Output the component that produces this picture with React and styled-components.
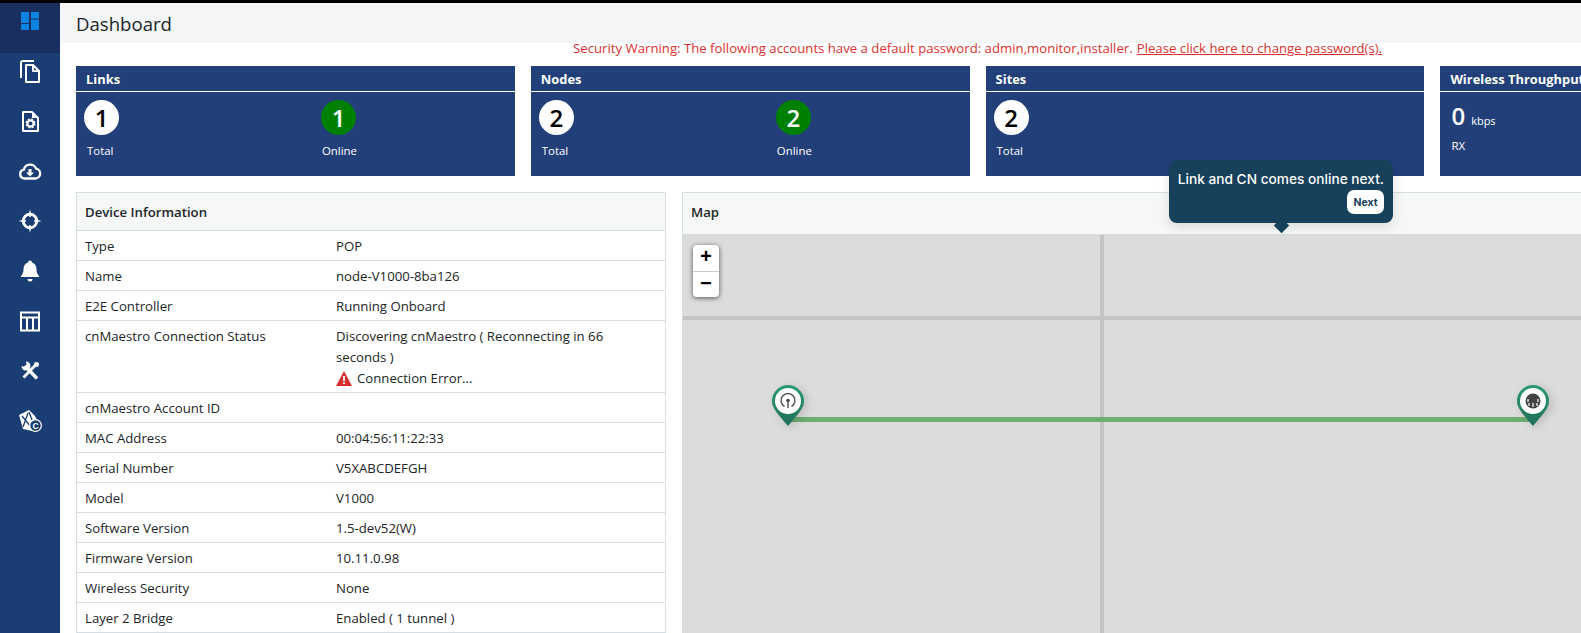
import React from "react";
import styled, { createGlobalStyle } from "styled-components";

const Global = createGlobalStyle`
  html, body { margin: 0; padding: 0; background: #fff; }
  body { font-family: "Open Sans", "Noto Sans", sans-serif; color: #212529; overflow: hidden; }
  * { box-sizing: border-box; }
`;

const Shell = styled.div`
  width: 1581px; height: 633px; overflow: hidden; display: flex; flex-direction: column; background: #fff;
`;
const TopEdge = styled.div`height: 3px; background: #000; flex: none;`;
const Body = styled.div`display: flex; flex: 1; min-height: 0;`;
const Side = styled.nav`width: 60px; flex: none; background: #1a3e73; display: flex; flex-direction: column;`;
const NavItem = styled.div`
  height: 50px; flex: none; display: flex; justify-content: center; align-items: flex-start; padding-top: 6px;
  background: ${p => (p.$active ? "#182f5f" : "transparent")};
  svg { width: 24px; height: 24px; display: block; }
`;
const Main = styled.main`flex: 1; min-width: 0; overflow: hidden; display: flex; flex-direction: column; position: relative;`;
const Header = styled.header`
  height: 40px; flex: none; background: #f4f5f7; display: flex; align-items: center; padding: 1px 16px 0;
  font-size: 18.6px; color: #212529;
`;
const Warning = styled.div`
  height: 23px; flex: none; padding-left: 513px; font-size: 13.2px; line-height: 11px; color: #e0312f;
  display: flex; align-items: flex-start; white-space: nowrap; gap: 4px;
  a { color: inherit; text-decoration: underline; }
`;
const Cards = styled.section`display: flex; gap: 16px; padding-left: 16px; flex: none;`;
const Card = styled.article`width: 438.8px; height: 110px; flex: none; background: #223f7a; color: #fff;`;
const CardTitle = styled.h3`
  margin: 0; height: 26px; padding: 1px 10px 0; border-bottom: 1px solid #fff; font-size: 12.9px; font-weight: 700;
  display: flex; align-items: center; white-space: nowrap;
`;
const Stats = styled.div`display: grid; grid-template-columns: 237px 1fr; padding: 8px 0 0 8px;`;
const Stat = styled.div`display: flex; flex-direction: column; align-items: flex-start;`;
const Circle = styled.div`
  width: 35px; height: 35px; border-radius: 50%; display: flex; align-items: center; justify-content: center;
  background: ${p => (p.$online ? "#008000" : "#fff")}; color: ${p => (p.$online ? "#fff" : "#000")};
  font-size: 24px; font-weight: 600; line-height: 1;
`;
const StatLabel = styled.div`font-size: 11.4px; margin: 8px 0 0 ${p => (p.$online ? 1 : 3)}px; line-height: 16px;`;
const Rate = styled.div`padding: 9px 0 0 11px; display: flex; align-items: baseline; gap: 6px; font-size: 11px;`;
const RateValue = styled.span`font-size: 24px; font-weight: 600; line-height: 30px;`;
const RateLabel = styled.div`font-size: 11.4px; padding: 7px 0 0 11px;`;
const Panels = styled.section`display: flex; gap: 16px; padding: 16px 0 0 16px; flex: 1; min-height: 0;`;
const InfoPanel = styled.div`width: 590px; flex: none; border: 1px solid #d5dfe3; border-bottom: none;`;
const PanelHead = styled.div`
  height: ${p => p.$h}px; background: #f6f8f8; border-bottom: 1px solid #d5dfe3; display: flex; align-items: center;
  padding: ${p => (p.$h === 38 ? "1px 8px 0" : "0 8px 3px")}; font-size: 13.2px; font-weight: 600; color: #212529;
`;
const Row = styled.div`
  display: grid; grid-template-columns: 251px 1fr; padding: 5px 8px 3px; border-bottom: 1px solid #d5dfe3;
  font-size: 13.2px; line-height: 21px; color: #212529;
`;
const Value = styled.div`padding-right: 10px;`;
const Warn = styled.div`display: flex; align-items: center; gap: 5px; height: 21px; svg { width: 16px; height: 15px; }`;
const MapPanel = styled.div`flex: 1; min-width: 0; border-left: 1px solid #d5dfe3; border-top: 1px solid #d5dfe3; display: flex; flex-direction: column; margin-right: -30px;`;
const MapCanvas = styled.div`flex: 1; background: #dcdcdc; position: relative; overflow: hidden;`;
const RoadV = styled.div`position: absolute; left: 417px; top: 0; bottom: 0; width: 4px; background: #c4c4c4;`;
const RoadH = styled.div`position: absolute; left: 0; right: 0; top: 81px; height: 4px; background: #c4c4c4;`;
const Link = styled.div`position: absolute; left: 104px; top: 182px; width: 746px; height: 5px; background: #6fae72;`;
const Zoom = styled.div`
  position: absolute; left: 10px; top: 10px; width: 26px; height: 52px; background: #fff; border-radius: 4px;
  box-shadow: 0 1px 5px rgba(0,0,0,.65); display: flex; flex-direction: column;
`;
const ZoomBtn = styled.div`
  flex: 1; display: flex; align-items: center; justify-content: center; font: 700 20px "Liberation Mono", monospace; color: #000;
  & + & { border-top: 1px solid #ccc; }
`;
const PinWrap = styled.div`position: absolute; left: ${p => p.$x}px; top: 148px; width: 34px; height: 44px; filter: drop-shadow(3px 2px 4px rgba(0,0,0,.15)); svg { display: block; }`;
const Tip = styled.div`
  position: absolute; left: 1109px; top: 157px; width: 224px; height: 63px; background: #17405a; border-radius: 8px; color: #fff;
  padding: 11px 9px 0; display: flex; flex-direction: column; align-items: flex-end; font: 500 13.7px/17px Inter, sans-serif;
  box-shadow: 0 4px 12px rgba(0,0,0,.12); white-space: nowrap;
  &::after {
    content: ""; position: absolute; left: 106.5px; bottom: -7.5px; width: 11px; height: 11px; background: #17405a; transform: rotate(45deg);
  }
`;
const TipNext = styled.button`
  margin-top: 2px; width: 37px; height: 24px; border: 0; border-radius: 7px; background: #fff; color: #17405a; padding: 0;
  font: 700 10.5px Inter, sans-serif;
`;

const White = { fill: "#fff" };
const icons = [
  <svg viewBox="0 0 24 24" key="a"><g fill="#0a84e0"><rect x="3" y="3" width="8" height="11"/><rect x="13" y="3" width="8" height="6.500"/><rect x="3" y="15" width="8" height="6"/><rect x="13" y="10.500" width="8" height="10.500"/></g></svg>,
  <svg viewBox="0 0 24 24" key="b"><path fill="none" stroke="#fff" strokeWidth="2" strokeLinejoin="round" d="M16 2H5a2 2 0 0 0-2 2v15M8 6h7l6 6v11H8zM15 6v6h6"/></svg>,
  <svg viewBox="0 0 24 24" key="c"><path fill="none" stroke="#fff" strokeWidth="2" strokeLinejoin="round" d="M5 3h9l6 6v13H5z"/><path {...White} d="M14 3l6 6h-6z"/><circle cx="12.500" cy="14.500" r="3" fill="none" stroke="#fff" strokeWidth="2"/><circle cx="12.500" cy="14.500" r="4.300" fill="none" stroke="#fff" strokeWidth="1.400" strokeDasharray="2 1.400"/></svg>,
  <svg viewBox="0 0 24 24" key="d"><path fill="none" stroke="#fff" strokeWidth="2.300" d="M6.500 19.500a4.500 4.500 0 0 1-.7-8.900 6.500 6.500 0 0 1 12.300-1 5 5 0 0 1-.6 9.900z"/><path {...White} d="M10.500 10h3v3.500H16L12 17.500 8 13.500h2.500z"/></svg>,
  <svg viewBox="0 0 24 24" key="e"><circle cx="12" cy="12" r="6.800" fill="none" stroke="#fff" strokeWidth="2.800"/><path fill="#fff" d="M10.500 6L12 .5 13.500 6zM10.500 18L12 23.500 13.500 18zM6 10.500L.5 12 6 13.500zM18 10.500L23.500 12 18 13.500z"/><path stroke="#fff" strokeWidth="1.600" d="M12 5v3M12 16v3M5 12h3M16 12h3"/></svg>,
  <svg viewBox="0 0 24 24" key="f"><path {...White} d="M12 1.500a2 2 0 0 1 2 2c3 1 4.500 3.500 4.500 7 0 3.500 1 4.500 2.500 6.500v1H3v-1c1.500-2 2.500-3 2.500-6.500 0-3.500 1.500-6 4.500-7a2 2 0 0 1 2-2zM9.500 20h5a2.500 2.500 0 0 1-5 0z"/></svg>,
  <svg viewBox="0 0 24 24" key="g"><path fill="none" stroke="#fff" strokeWidth="2" d="M3 3.500h18v18H3zM3 8.500h18M9 8.500v13M15 8.500v13"/></svg>,
  <svg viewBox="0 0 24 24" key="h"><path stroke="#fff" strokeWidth="3.400" d="M8 8l11 11.500"/><path stroke="#fff" strokeWidth="2.800" d="M19 4.500L5.500 18.500"/><path {...White} d="M16.500 3.500l3-.5 1.500 1.500-.5 3-2 .5-2.500-2.500z"/><circle cx="8" cy="7" r="4.500" fill="#fff"/><path fill="#1a3e73" d="M3 2h5l.5 3.500L6 7.500 2.500 7z"/></svg>,
  <svg viewBox="0 0 24 24" key="i"><path {...White} d="M1 6l10-5 6 6 4 8-7 7-9-2z"/><path fill="none" stroke="#1a3e73" strokeWidth="1.300" d="M4 7l9 11M5 18l5-14M11 3l3 8"/><circle cx="17.500" cy="16.500" r="6.500" fill="#fff"/><circle cx="17.500" cy="16.500" r="5.200" fill="#1a3e73"/><text x="17.500" y="19.500" textAnchor="middle" fontSize="8.500" fontWeight="700" fill="#fff" fontFamily="Liberation Sans">C</text></svg>,
];

const Pin = ({ kind, id }) => (
  <svg width="34" height="44" viewBox="0 0 34 44">
    <defs><linearGradient id={id} x1="0" y1="0" x2="0" y2="1"><stop offset="0" stopColor="#2a9a74"/><stop offset="1" stopColor="#1f6f58"/></linearGradient></defs>
    <path fill={`url(#${id})`} d="M17 2a16 16 0 0 1 16 16c0 7-5 12-16 25C6 30 1 25 1 18A16 16 0 0 1 17 2z"/>
    <circle cx="17" cy="18" r="13" fill="#fff"/>
    {kind === "pop" ? (
      <g fill="none" stroke="#555" strokeWidth="1.500"><path d="M13.500 23.500a7 7 0 1 1 7 0"/><circle cx="17" cy="17.500" r="1.800" fill="#444" stroke="none"/><path d="M17 18v7"/></g>
    ) : (
      <g><circle cx="17" cy="18" r="7.500" fill="#444"/><path stroke="#fff" strokeWidth="1.200" d="M13 20v3M17 20v4M21 20v3M12 16v3M22 16v3"/></g>
    )}
  </svg>
);

const rows = [
  ["Type", "POP"], ["Name", "node-V1000-8ba126"], ["E2E Controller", "Running Onboard"],
  ["cnMaestro Connection Status", <>Discovering cnMaestro ( Reconnecting in 66 seconds )<Warn><svg viewBox="0 0 16 15"><path fill="#dc3030" d="M8 0l8 15H0z"/><path stroke="#fff" strokeWidth="1.800" d="M8 5v5M8 11.200v1.800"/></svg>Connection Error...</Warn></>],
  ["cnMaestro Account ID", ""], ["MAC Address", "00:04:56:11:22:33"], ["Serial Number", "V5XABCDEFGH"], ["Model", "V1000"],
  ["Software Version", "1.5-dev52(W)"], ["Firmware Version", "10.11.0.98"], ["Wireless Security", "None"], ["Layer 2 Bridge", "Enabled ( 1 tunnel )"],
];

const StatBlock = ({ n, label, online }) => (
  <Stat><Circle $online={online}>{n}</Circle><StatLabel $online={online}>{label}</StatLabel></Stat>
);

export default function App() {
  return (
    <Shell>
      <Global />
      <TopEdge />
      <Body>
        <Side>{icons.map((ic, i) => <NavItem key={i} $active={i === 0}>{ic}</NavItem>)}</Side>
        <Main>
          <Header>Dashboard</Header>
          <Warning><span>Security Warning: The following accounts have a default password: admin,monitor,installer.</span><a>Please click here to change password(s).</a></Warning>
          <Cards>
            <Card><CardTitle>Links</CardTitle><Stats><StatBlock n="1" label="Total"/><StatBlock n="1" label="Online" online/></Stats></Card>
            <Card><CardTitle>Nodes</CardTitle><Stats><StatBlock n="2" label="Total"/><StatBlock n="2" label="Online" online/></Stats></Card>
            <Card><CardTitle>Sites</CardTitle><Stats><StatBlock n="2" label="Total"/></Stats></Card>
            <Card><CardTitle>Wireless Throughput</CardTitle><Rate><RateValue>0</RateValue>kbps</Rate><RateLabel>RX</RateLabel></Card>
          </Cards>
          <Panels>
            <InfoPanel>
              <PanelHead $h={38}>Device Information</PanelHead>
              {rows.map(([k, v]) => <Row key={k}><span>{k}</span><Value>{v}</Value></Row>)}
            </InfoPanel>
            <MapPanel>
              <PanelHead $h={42}>Map</PanelHead>
              <MapCanvas>
                <RoadV /><RoadH /><Link />
                <Zoom><ZoomBtn>+</ZoomBtn><ZoomBtn>−</ZoomBtn></Zoom>
                <PinWrap $x={88}><Pin kind="pop" id="p1"/></PinWrap>
                <PinWrap $x={833}><Pin kind="cn" id="p2"/></PinWrap>
              </MapCanvas>
            </MapPanel>
          </Panels>
          <Tip>Link and CN comes online next.<TipNext>Next</TipNext></Tip>
        </Main>
      </Body>
    </Shell>
  );
}
